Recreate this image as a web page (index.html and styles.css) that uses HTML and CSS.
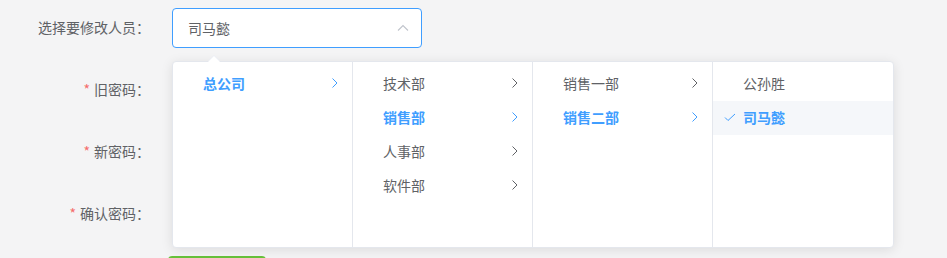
FILE: index.html
```html
<!DOCTYPE html>
<html lang="zh-CN">
<head>
    <meta charset="UTF-8">
    <meta name="viewport" content="width=device-width, initial-scale=1.0">
    <title>修改密码</title>
    <link rel="stylesheet" href="styles.css">
</head>
<body>
    <div class="page">
        <form class="pwd-form">
            <div class="form-item">
                <label class="form-label">选择要修改人员：</label>
                <div class="form-content">
                    <div class="select is-focus">
                        <span class="select-value">司马懿</span>
                        <svg class="select-arrow" width="12" height="8" viewBox="0 0 12 8">
                            <polyline points="1,6.5 6,1.5 11,6.5" fill="none" stroke="#c0c4cc" stroke-width="1.1"/>
                        </svg>
                    </div>
                </div>
            </div>
            <div class="form-item">
                <label class="form-label is-required">旧密码：</label>
                <div class="form-content"></div>
            </div>
            <div class="form-item">
                <label class="form-label is-required">新密码：</label>
                <div class="form-content"></div>
            </div>
            <div class="form-item">
                <label class="form-label is-required">确认密码：</label>
                <div class="form-content"></div>
            </div>
            <div class="form-actions">
                <button type="button" class="btn-success" aria-label="确定"></button>
            </div>
        </form>

        <div class="cascader-panel">
            <div class="popper-arrow"></div>
            <ul class="cascader-menu">
                <li class="cascader-node is-active">
                    <span class="node-label">总公司</span>
                    <svg class="node-arrow" width="14" height="14" viewBox="0 0 14 14"><polyline points="4.5,2.5 9,7 4.5,11.5" fill="none" stroke="currentColor" stroke-width="1"/></svg>
                </li>
            </ul>
            <ul class="cascader-menu">
                <li class="cascader-node">
                    <span class="node-label">技术部</span>
                    <svg class="node-arrow" width="14" height="14" viewBox="0 0 14 14"><polyline points="4.5,2.5 9,7 4.5,11.5" fill="none" stroke="currentColor" stroke-width="1"/></svg>
                </li>
                <li class="cascader-node is-active">
                    <span class="node-label">销售部</span>
                    <svg class="node-arrow" width="14" height="14" viewBox="0 0 14 14"><polyline points="4.5,2.5 9,7 4.5,11.5" fill="none" stroke="currentColor" stroke-width="1"/></svg>
                </li>
                <li class="cascader-node">
                    <span class="node-label">人事部</span>
                    <svg class="node-arrow" width="14" height="14" viewBox="0 0 14 14"><polyline points="4.5,2.5 9,7 4.5,11.5" fill="none" stroke="currentColor" stroke-width="1"/></svg>
                </li>
                <li class="cascader-node">
                    <span class="node-label">软件部</span>
                    <svg class="node-arrow" width="14" height="14" viewBox="0 0 14 14"><polyline points="4.5,2.5 9,7 4.5,11.5" fill="none" stroke="currentColor" stroke-width="1"/></svg>
                </li>
            </ul>
            <ul class="cascader-menu">
                <li class="cascader-node">
                    <span class="node-label">销售一部</span>
                    <svg class="node-arrow" width="14" height="14" viewBox="0 0 14 14"><polyline points="4.5,2.5 9,7 4.5,11.5" fill="none" stroke="currentColor" stroke-width="1"/></svg>
                </li>
                <li class="cascader-node is-active">
                    <span class="node-label">销售二部</span>
                    <svg class="node-arrow" width="14" height="14" viewBox="0 0 14 14"><polyline points="4.5,2.5 9,7 4.5,11.5" fill="none" stroke="currentColor" stroke-width="1"/></svg>
                </li>
            </ul>
            <ul class="cascader-menu">
                <li class="cascader-node">
                    <span class="node-label">公孙胜</span>
                </li>
                <li class="cascader-node is-active is-selected">
                    <svg class="node-check" width="14" height="14" viewBox="0 0 14 14"><polyline points="2,7.5 5,10.5 12,4" fill="none" stroke="currentColor" stroke-width="1"/></svg>
                    <span class="node-label">司马懿</span>
                </li>
            </ul>
        </div>
    </div>
</body>
</html>
```

FILE: styles.css
```css
body {
    margin: 0;
    padding: 0;
    font-family: "Noto Sans CJK SC", "Noto Sans", sans-serif;
    font-size: 14px;
    background: #f4f4f5;
    color: #606266;
}

.page {
    position: relative;
    height: 258px;
    overflow: hidden;
    padding-top: 8px;
    box-sizing: border-box;
}

.pwd-form {
    margin: 0;
}

.form-item {
    display: flex;
    height: 40px;
    margin-bottom: 22px;
}

.form-label {
    width: 162px;
    padding-right: 12px;
    box-sizing: border-box;
    text-align: right;
    line-height: 39px;
    color: #606266;
}

.form-label.is-required::before {
    content: "*";
    color: #f56c6c;
    margin-right: 4px;
}

.form-content {
    margin-left: 10px;
    width: 250px;
}

.select {
    height: 40px;
    box-sizing: border-box;
    border: 1px solid #dcdfe6;
    border-radius: 4px;
    background: #fff;
    padding: 0 5px 0 15px;
    display: flex;
    align-items: center;
    justify-content: space-between;
}

.select.is-focus {
    border-color: #409eff;
}

.select-value {
    color: #606266;
}

.select-arrow {
    margin-right: 7px;
}

.form-actions {
    padding-left: 168px;
}

.btn-success {
    display: block;
    width: 98px;
    height: 40px;
    border: none;
    border-radius: 4px;
    background: #67c23a;
}

/* dropdown lies over the form */
.cascader-panel {
    position: absolute;
    left: 172px;
    top: 61px;
    display: flex;
    background: #fff;
    border: 1px solid #e4e7ed;
    border-radius: 4px;
    box-shadow: 0 2px 12px rgba(0, 0, 0, 0.1);
}

.popper-arrow {
    position: absolute;
    left: 35px;
    top: -6px;
    width: 0;
    height: 0;
    border-left: 6px solid transparent;
    border-right: 6px solid transparent;
    border-bottom: 6px solid #fff;
    filter: drop-shadow(0 -1px 0 #ebeef5);
}

.cascader-menu {
    list-style: none;
    margin: 0;
    padding: 5px 0 6px;
    width: 180px;
    height: 185px;
    box-sizing: border-box;
    border-right: 1px solid #e4e7ed;
}

.cascader-menu:last-child {
    border-right: none;
}

.cascader-node {
    position: relative;
    display: flex;
    align-items: center;
    height: 34px;
    box-sizing: border-box;
    padding: 0 30px 2px 20px;
    color: #606266;
}

.node-label {
    flex: 1;
    padding: 0 10px;
}

.node-arrow {
    position: absolute;
    right: 10px;
    top: 9px;
}

.node-check {
    position: absolute;
    left: 10px;
    top: 9px;
}

.cascader-node.is-active {
    color: #409eff;
    font-weight: bold;
}

.cascader-node.is-selected {
    background: #f5f7fa;
}
```
